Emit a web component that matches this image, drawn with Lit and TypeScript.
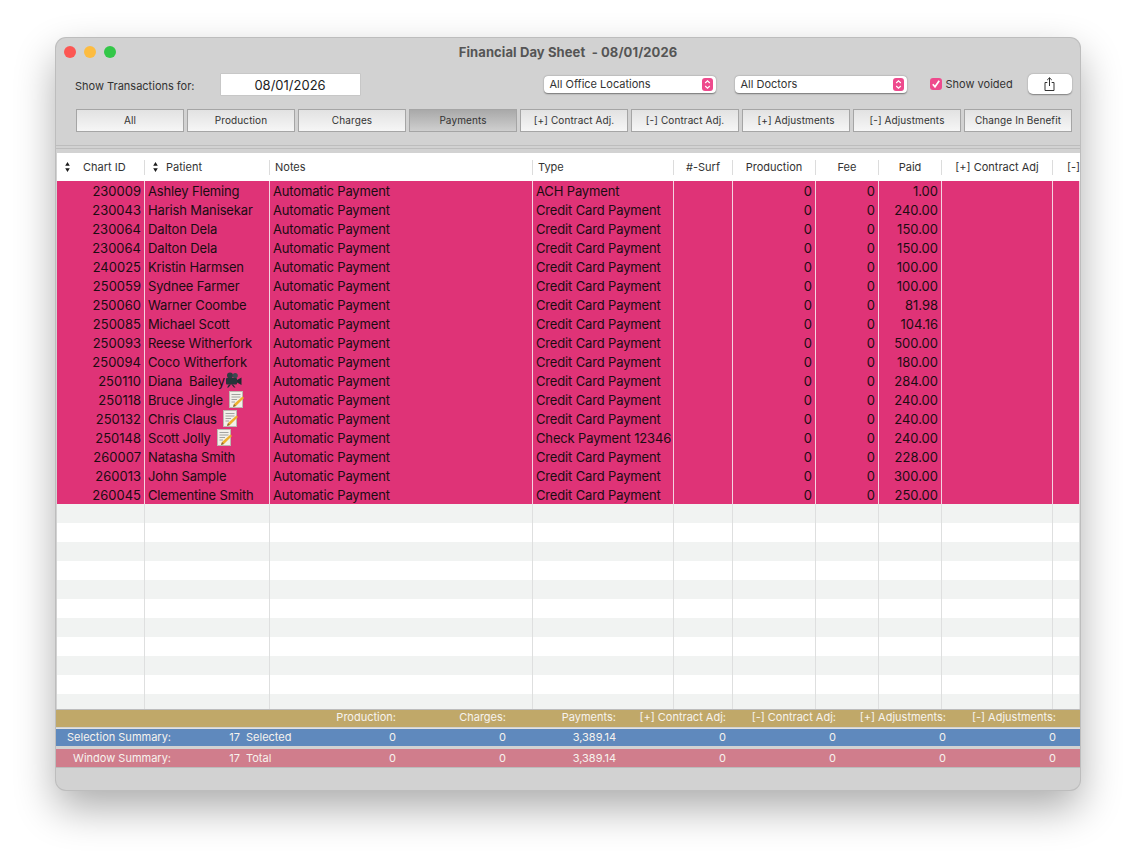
import { LitElement, html, css, svg } from "lit";
import { customElement } from "lit/decorators.js";

interface Row {
  id: string;
  patient: string;
  type: string;
  paid: string;
  icon?: "video" | "memo";
}

const ROWS: Row[] = [
  { id: "230009", patient: "Ashley Fleming", type: "ACH Payment", paid: "1.00" },
  { id: "230043", patient: "Harish Manisekar", type: "Credit Card Payment", paid: "240.00" },
  { id: "230064", patient: "Dalton Dela", type: "Credit Card Payment", paid: "150.00" },
  { id: "230064", patient: "Dalton Dela", type: "Credit Card Payment", paid: "150.00" },
  { id: "240025", patient: "Kristin Harmsen", type: "Credit Card Payment", paid: "100.00" },
  { id: "250059", patient: "Sydnee Farmer", type: "Credit Card Payment", paid: "100.00" },
  { id: "250060", patient: "Warner Coombe", type: "Credit Card Payment", paid: "81.98" },
  { id: "250085", patient: "Michael Scott", type: "Credit Card Payment", paid: "104.16" },
  { id: "250093", patient: "Reese Witherfork", type: "Credit Card Payment", paid: "500.00" },
  { id: "250094", patient: "Coco Witherfork", type: "Credit Card Payment", paid: "180.00" },
  { id: "250110", patient: "Diana  Bailey", type: "Credit Card Payment", paid: "284.00", icon: "video" },
  { id: "250118", patient: "Bruce Jingle", type: "Credit Card Payment", paid: "240.00", icon: "memo" },
  { id: "250132", patient: "Chris Claus", type: "Credit Card Payment", paid: "240.00", icon: "memo" },
  { id: "250148", patient: "Scott Jolly", type: "Check Payment 12346", paid: "240.00", icon: "memo" },
  { id: "260007", patient: "Natasha Smith", type: "Credit Card Payment", paid: "228.00" },
  { id: "260013", patient: "John Sample", type: "Credit Card Payment", paid: "300.00" },
  { id: "260045", patient: "Clementine Smith", type: "Credit Card Payment", paid: "250.00" },
];

const BUTTONS = [
  "All",
  "Production",
  "Charges",
  "Payments",
  "[+] Contract Adj.",
  "[-] Contract Adj.",
  "[+] Adjustments",
  "[-] Adjustments",
  "Change In Benefit",
];

const SUMMARY_HEADS = [
  "Production:",
  "Charges:",
  "Payments:",
  "[+] Contract Adj:",
  "[-] Contract Adj:",
  "[+] Adjustments:",
  "[-] Adjustments:",
];

const sortArrows = html`<svg class="sort" width="7" height="12" viewBox="0 0 7 12">
  <path d="M3.5 1 L5.8 4.8 H1.2 Z M3.5 11 L1.2 7.2 H5.8 Z" fill="#1c1c1c"></path>
</svg>`;

const stepper = html`<span class="stepper"><svg width="11" height="13" viewBox="0 0 11 13">
  <path d="M3.2 5 L5.5 2.8 L7.8 5 M3.2 8 L5.5 10.2 L7.8 8" fill="none" stroke="#fff" stroke-width="1.2"></path>
</svg></span>`;

const videoIcon = svg`<svg class="emoji" style="margin-left:0" width="17" height="16" viewBox="0 0 17 16">
  <circle cx="5" cy="3.6" r="3" fill="#2e3b40"></circle>
  <circle cx="10.2" cy="3.6" r="2.6" fill="#3c4a50"></circle>
  <rect x="1" y="6" width="11" height="6.5" rx="1" fill="#26343a"></rect>
  <path d="M12 8 L16.5 5.5 V13 L12 10.5 Z" fill="#1f2b30"></path>
  <path d="M4 12.5 L2 15.5 H3.5 L6 12.5 Z M8 12.5 L10.5 15.5 H9 L6.5 12.5 Z" fill="#1f2b30"></path>
</svg>`;

const memoIcon = svg`<svg class="emoji" style="margin-left:6px" width="15" height="17" viewBox="0 0 15 17">
  <rect x="0.5" y="0.5" width="13" height="16" fill="#f2f0ea" stroke="#bdb9b0"></rect>
  <path d="M2.5 3.5 H11.5 M2.5 6 H11.5 M2.5 8.5 H8 M2.5 11 H6" stroke="#9a9a98" stroke-width="0.9"></path>
  <path d="M13.5 5.5 L15 7 L7 15 L4 16 L5 13 Z" fill="#eeb02e"></path>
  <path d="M5 13 L4 16 L7 15 Z" fill="#8b6a3a"></path>
</svg>`;

@customElement("app-root")
export class AppRoot extends LitElement {
  static styles = css`
    :host {
      display: block;
      width: 1136px;
      height: 864px;
      padding: 38px 0 0 56px;
      box-sizing: border-box;
      background: #fff;
      font-family: Inter, "Liberation Sans", sans-serif;
      overflow: hidden;
    }
    .window {
      width: 1024px;
      height: 752px;
      box-sizing: border-box;
      background: #d2d2d2;
      border-radius: 10px;
      box-shadow: 0 0 0 1px #bdbdbd, 0 18px 42px rgba(0, 0, 0, 0.33);
      display: flex;
      flex-direction: column;
      overflow: hidden;
    }
    .titlebar {
      height: 28px;
      flex: none;
      display: flex;
      align-items: center;
      position: relative;
      justify-content: center;
      font-size: 13px;
      font-weight: 700;
      letter-spacing: 0.1px;
      color: #555;
      box-sizing: border-box;
    }
    .titlebar span {
      white-space: pre;
    }
    .lights {
      position: absolute;
      left: 8px;
      top: 8px;
      display: flex;
      gap: 8px;
    }
    .lights i {
      width: 12px;
      height: 12px;
      border-radius: 50%;
    }
    .filters {
      height: 44px;
      flex: none;
      box-sizing: border-box;
      display: flex;
      align-items: center;
      padding: 0 8px 8px 19px;
      font-size: 11px;
      color: #333;
    }
    .filters .cap {
      margin-top: 3px;
    }
    .date {
      width: 139px;
      height: 21px;
      margin-left: 26px;
      margin-top: 1px;
      background: #fff;
      box-shadow: 0 0 0 0.5px #bbb;
      display: flex;
      align-items: center;
      justify-content: center;
      font-size: 13px;
      color: #222;
      box-sizing: border-box;
    }
    .select {
      height: 17px;
      width: 172px;
      box-sizing: border-box;
      background: #fff;
      border-radius: 4px;
      box-shadow: 0 0.5px 1.5px rgba(0, 0, 0, 0.45);
      display: flex;
      align-items: center;
      justify-content: space-between;
      padding: 0 3px 0 6px;
      font-size: 11px;
      color: #333;
    }
    .select.first {
      margin-left: 184px;
      margin-right: 19px;
    }
    .stepper {
      width: 11px;
      height: 13px;
      border-radius: 3px;
      background: #ee4a8d;
      display: flex;
    }
    .check {
      display: flex;
      align-items: center;
      gap: 4px;
      margin-left: 23px;
    }
    .box {
      width: 12px;
      height: 12px;
      border-radius: 3px;
      background: #ee4a8d;
      display: flex;
    }
    .share {
      margin-left: auto;
      width: 44px;
      height: 20px;
      padding-right: 1px;
      box-sizing: border-box;
      background: #fff;
      border-radius: 5px;
      box-shadow: 0 0.5px 1.5px rgba(0, 0, 0, 0.4);
      display: flex;
      align-items: center;
      justify-content: center;
    }
    .buttons {
      flex: none;
      display: flex;
      gap: 3px;
      padding: 0 0 0 20px;
      height: 23px;
      margin-top: -1px;
    }
    .buttons button {
      width: 108px;
      height: 23px;
      padding: 0 0 2px;
      font: inherit;
      font-size: 10px;
      color: #333;
      letter-spacing: 0.1px;
      border: 1px solid #a5a5a5;
      background: linear-gradient(#e2e2e2, #f6f6f6);
      white-space: nowrap;
    }
    .buttons button.on {
      background: linear-gradient(#a9a9a9, #cfcfcf);
    }
    .seps {
      flex: none;
      height: 4px;
      margin-top: 13px;
      margin-bottom: 3px;
      border-top: 1px solid #bdbdbd;
      border-bottom: 1px solid #bdbdbd;
      box-sizing: border-box;
    }
    .table {
      flex: none;
      margin-top: 1px;
      margin-left: 1px;
      height: 556px;
      background: #fff;
      overflow: hidden;
      display: flex;
      flex-direction: column;
    }
    .r {
      display: grid;
      grid-template-columns: 88px 125px 263px 141px 59px 83px 63px 63px 111px 27px;
      flex: none;
    }
    .head {
      height: 28px;
      font-size: 11px;
      color: #333;
      align-items: center;
    }
    .head > div {
      height: 15px;
      line-height: 15px;
      border-right: 1px solid #dcdcdc;
      box-sizing: border-box;
      white-space: nowrap;
      overflow: hidden;
      text-align: center;
    }
    .head > div.l {
      text-align: left;
      display: flex;
      align-items: center;
    }
    .head > div.notes {
      padding-left: 5px;
    }
    .head > div.clip {
      padding-left: 14px;
      border: 0;
    }
    .sort {
      margin: 0 7px 0 7px;
      flex: none;
    }
    .chart-label {
      margin-left: 5px;
    }
    .row {
      height: 19px;
      font-size: 13px;
      line-height: 19px;
      color: #1b0c12;
    }
    .row > div {
      box-sizing: border-box;
      border-right: 1px solid #f4d3e0;
      padding: 1px 3px 0;
      white-space: pre;
      overflow: hidden;
      letter-spacing: -0.15px;
    }
    .row.data {
      background: #df3377;
    }
    .row.odd {
      background: #f1f3f2;
    }
    .row.even {
      background: #fff;
    }
    .row.odd > div,
    .row.even > div {
      border-right-color: #dedfdf;
    }
    .row > div.n {
      text-align: right;
      letter-spacing: 0;
    }
    .row > div.name {
      display: flex;
      align-items: center;
    }
    .emoji {
      flex: none;
      margin-top: -2px;
    }
    .sum {
      display: grid;
      grid-template-columns: 115px 69px 46px repeat(7, 110px) 1fr;
      flex: none;
      font-size: 11px;
      color: #f7f3ee;
      align-items: center;
      white-space: nowrap;
      box-sizing: border-box;
    }
    .sum > div {
      text-align: right;
    }
    .sum > div.t {
      text-align: left;
      padding-left: 6px;
    }
    .sum.tan {
      height: 18px;
      padding-bottom: 3px;
      background: #c0a869;
      border-top: 1px solid #bdbdbd;
    }
    .sum.blue {
      height: 17px;
      padding-bottom: 1px;
      margin-top: 2px;
      background: #5f89bd;
      box-shadow: 0 -1px 0 #e2e2e2;
    }
    .sum.rose {
      height: 18px;
      margin-top: 3px;
      background: #d07d8c;
      box-shadow: 0 1px 0 #bbb;
    }
  `;

  private summaryRow(cls: string, label: string, word: string, paid: string) {
    return html`<div class="sum ${cls}">
      <div>${label}</div>
      <div>17</div>
      <div class="t">${word}</div>
      <div>0</div>
      <div>0</div>
      <div>${paid}</div>
      <div>0</div>
      <div>0</div>
      <div>0</div>
      <div>0</div>
    </div>`;
  }

  render() {
    const blanks = Array.from({ length: 11 }, (_, i) => i);
    return html`
      <div class="window">
        <div class="titlebar">
          <div class="lights">
            <i style="background:#fc5753"></i>
            <i style="background:#fdbc40"></i>
            <i style="background:#33c748"></i>
          </div>
          <span>Financial Day Sheet  - 08/01/2026</span>
        </div>
        <div class="filters">
          <span class="cap">Show Transactions for:</span>
          <div class="date">08/01/2026</div>
          <div class="select first">All Office Locations ${stepper}</div>
          <div class="select">All Doctors ${stepper}</div>
          <label class="check">
            <span class="box"><svg width="12" height="12" viewBox="0 0 12 12">
              <path d="M2.8 6.2 L5 8.8 L9.2 2.8" fill="none" stroke="#fff" stroke-width="1.7"></path>
            </svg></span>
            Show voided
          </label>
          <div class="share">
            <svg width="11" height="14" viewBox="0 0 11 14">
              <path d="M3.3 5.5 H1 V13.5 H10 V5.5 H7.7 M5.5 9 V0.8 M3.2 3 L5.5 0.8 L7.8 3" fill="none" stroke="#333"></path>
            </svg>
          </div>
        </div>
        <div class="buttons">
          ${BUTTONS.map((b) => html`<button class=${b === "Payments" ? "on" : ""}>${b}</button>`)}
        </div>
        <div class="seps"></div>
        <div class="table">
          <div class="r head">
            <div class="l">${sortArrows}<span class="chart-label">Chart ID</span></div>
            <div class="l">${sortArrows}Patient</div>
            <div class="l notes">Notes</div>
            <div class="l notes">Type</div>
            <div>#-Surf</div>
            <div>Production</div>
            <div>Fee</div>
            <div>Paid</div>
            <div>[+] Contract Adj</div>
            <div class="l clip">[-] Contract Adj</div>
          </div>
          ${ROWS.map(
            (r) => html`<div class="r row data">
              <div class="n">${r.id}</div>
              <div class="name">${r.patient}${r.icon === "video" ? videoIcon : r.icon === "memo" ? memoIcon : ""}</div>
              <div>Automatic Payment</div>
              <div>${r.type}</div>
              <div></div>
              <div class="n">0</div>
              <div class="n">0</div>
              <div class="n">${r.paid}</div>
              <div></div>
              <div></div>
            </div>`
          )}
          ${blanks.map(
            (i) => html`<div class="r row ${i % 2 ? "even" : "odd"}">
              <div></div><div></div><div></div><div></div><div></div>
              <div></div><div></div><div></div><div></div><div></div>
            </div>`
          )}
        </div>
        <div class="sum tan">
          <div></div>
          <div></div>
          <div></div>
          ${SUMMARY_HEADS.map((h) => html`<div>${h}</div>`)}
        </div>
        ${this.summaryRow("blue", "Selection Summary:", "Selected", "3,389.14")}
        ${this.summaryRow("rose", "Window Summary:", "Total", "3,389.14")}
      </div>
    `;
  }
}
